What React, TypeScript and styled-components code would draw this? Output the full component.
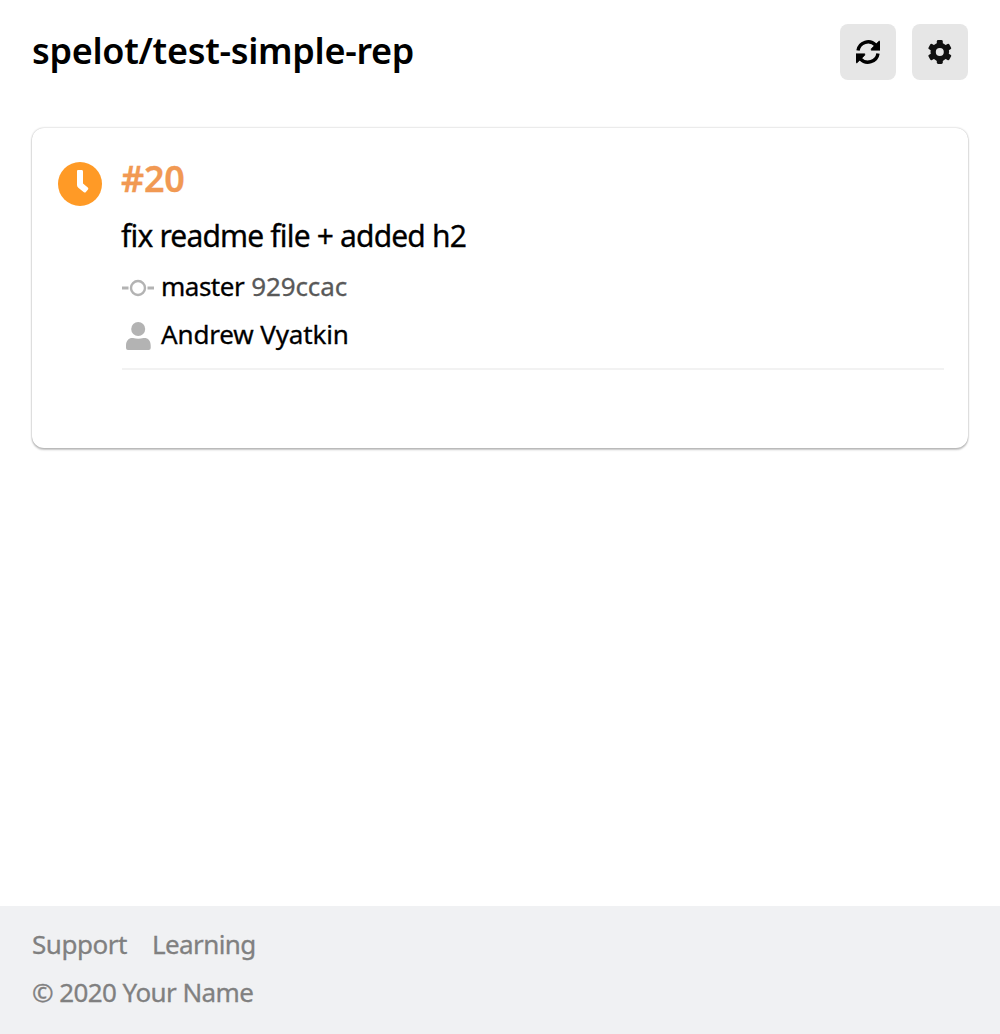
import React from "react";
import styled, { createGlobalStyle } from "styled-components";

const GlobalStyle = createGlobalStyle`
  *, *::before, *::after { box-sizing: border-box; }
  body {
    margin: 0;
    background: #fff;
    color: #000;
    font-family: "Noto Sans", "Open Sans", sans-serif;
  }
`;

const Page = styled.div`
  display: flex;
  flex-direction: column;
  min-height: 100vh;
`;

const Header = styled.header`
  display: flex;
  align-items: center;
  justify-content: space-between;
  padding: 24px 32px;
`;

const Title = styled.h1`
  margin: 0;
  height: 56px;
  font-size: 36px;
  line-height: 54px;
  font-weight: 600;
  letter-spacing: -0.3px;
  white-space: nowrap;
`;

const Actions = styled.div`
  display: flex;
  gap: 16px;
`;

const IconButton = styled.button`
  display: flex;
  align-items: center;
  justify-content: center;
  width: 56px;
  height: 56px;
  padding: 0;
  border: 0;
  border-radius: 8px;
  background: #e6e6e6;
  color: #000;
`;

const Main = styled.main`
  flex: 1;
  padding: 24px 32px;
`;

const Card = styled.article`
  display: flex;
  gap: 20px;
  height: 320px;
  padding: 24px 24px 24px 26px;
  border-radius: 12px;
  background: #fff;
  box-shadow: 0 0 2px rgba(0, 0, 0, 0.3), 0 2px 2px rgba(0, 0, 0, 0.22);
`;

const Status = styled.div`
  padding-top: 10px;
  line-height: 0;
`;

const Details = styled.div`
  flex: 1;
`;

const BuildNumber = styled.div`
  color: #f19953;
  font-size: 36px;
  line-height: 54px;
  height: 56px;
  font-weight: 600;
  letter-spacing: -0.3px;
  margin-left: -1px;
  -webkit-text-stroke: 0.3px;
`;

const Message = styled.div`
  font-size: 30px;
  line-height: 40px;
  padding: 8px 0;
  letter-spacing: -0.83px;
  margin-left: -1px;
  -webkit-text-stroke: 0.3px;
`;

const Meta = styled.div`
  display: flex;
  align-items: center;
  height: 48px;
  gap: 7px;
  font-size: 26px;
`;

const Label = styled.span<{ $spacing: number; $color?: string }>`
  height: 48px;
  line-height: 44px;
  color: ${(p) => p.$color || "#000"};
  letter-spacing: ${(p) => p.$spacing}px;
  white-space: nowrap;
  -webkit-text-stroke: 0.3px;
`;

const Divider = styled.hr`
  height: 2px;
  margin: 8px 0 0;
  border: 0;
  background: #f2f2f2;
`;

const Footer = styled.footer`
  display: flex;
  flex-direction: column;
  height: 128px;
  padding: 16px 32px;
  background: #f0f1f3;
  font-size: 26px;
`;

const Links = styled.nav`
  display: flex;
  gap: 25px;
`;

const Refresh = () => (
  <svg width="24" height="24" viewBox="0 0 24 24">
    <g id="half">
      <path d="M2 10.6A10.2 10.2 0 0 1 19.6 5.2" fill="none" stroke="#000" strokeWidth="3.4" />
      <path d="M22.8 1.2H24V10.2H15.2V8.8L18 6Z" fill="#000" stroke="#000" strokeWidth="0.6" strokeLinejoin="round" />
    </g>
    <use href="#half" transform="rotate(180 12 12)" />
  </svg>
);

const Gear = () => (
  <svg width="25" height="24" viewBox="0 0 25 24">
    <g fill="#111">
      {[0, 60, 120].map((angle) => (
        <rect key={angle} x="8.8" y="0" width="6" height="24" rx="1.4" transform={`rotate(${angle} 11.8 12)`} />
      ))}
      <circle cx="11.8" cy="12" r="9.3" />
    </g>
    <circle cx="11.8" cy="12" r="4" fill="#e6e6e6" />
  </svg>
);

const Clock = () => (
  <svg width="44" height="44" viewBox="0 0 44 44">
    <circle cx="22" cy="22" r="22" fill="#ff9a26" />
    <path
      d="M20 8H23.6Q25 8 25 9.4V21.6L29.8 25.6Q30.8 26.5 30 27.5L27.7 30.2Q26.9 31 25.9 30.2L20.3 25.8Q19 24.7 19 23V9Q19 8 20 8Z"
      fill="#fff"
    />
  </svg>
);

const Commit = () => (
  <svg width="32" height="32" viewBox="0 0 32 32" fill="none" stroke="#b3b3b3">
    <circle cx="16" cy="16" r="7" strokeWidth="2.4" />
    <path d="M0 16H6.5M25.5 16H32" strokeWidth="3.2" />
  </svg>
);

const User = () => (
  <svg width="32" height="32" viewBox="0 0 32 32" fill="#b3b3b3">
    <circle cx="16.2" cy="9" r="7" />
    <path d="M4 25.5C4 20 7.5 17.5 11 18C14.5 19 18 19 21.5 18C25.5 17.5 28.7 20 28.7 25.5V28Q28.7 30 26.7 30H6Q4 30 4 28Z" />
  </svg>
);

export default function App() {
  return (
    <Page>
      <GlobalStyle />
      <Header>
        <Title>spelot/test-simple-rep</Title>
        <Actions>
          <IconButton aria-label="Rebuild">
            <Refresh />
          </IconButton>
          <IconButton aria-label="Settings">
            <Gear />
          </IconButton>
        </Actions>
      </Header>
      <Main>
        <Card>
          <Status>
            <Clock />
          </Status>
          <Details>
            <BuildNumber>#20</BuildNumber>
            <Message>fix readme file + added h2</Message>
            <Meta>
              <Commit />
              <Label $spacing={-0.5}>master</Label>
              <Label $spacing={-0.1} $color="#595959">929ccac</Label>
            </Meta>
            <Meta>
              <User />
              <Label $spacing={-0.15}>Andrew Vyatkin</Label>
            </Meta>
            <Divider />
          </Details>
        </Card>
      </Main>
      <Footer>
        <Links>
          <Label $spacing={-0.45} $color="#808080">Support</Label>
          <Label $spacing={-0.6} $color="#808080">Learning</Label>
        </Links>
        <Label $spacing={-0.58} $color="#808080">© 2020 Your Name</Label>
      </Footer>
    </Page>
  );
}
